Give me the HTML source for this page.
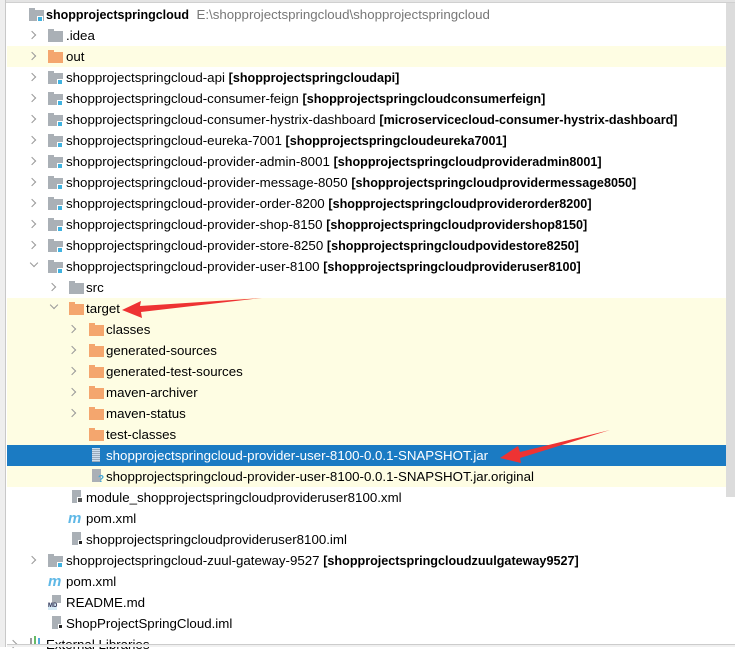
<!DOCTYPE html>
<html><head><meta charset="utf-8"><style>
*{margin:0;padding:0;box-sizing:border-box}
body{width:735px;height:647px;overflow:hidden;background:#fff;font-family:"Liberation Sans","Noto Sans CJK SC",sans-serif;font-size:13.3px;color:#000;position:relative}
.strip{position:absolute;left:0;top:0;width:6px;height:647px;background:#eeeeee;border-right:1px solid #c8c8c8}
.top{position:absolute;left:0;top:0;width:735px;height:3px;background:#e4e4e4;border-bottom:1px solid #d0d0d0}
.sb{position:absolute;left:726px;top:3px;width:9px;height:494px;background:#dcdcdc}
.hl{position:absolute;left:7px;width:719px;background:#fefde3}
.sel{position:absolute;left:7px;width:728px;height:21px;top:445px;background:#1b7bc3}
.row{position:absolute;height:21px;line-height:21px;white-space:nowrap}
.arr{position:absolute;width:6px;height:6px;border-right:1.5px solid #999;border-bottom:1.5px solid #999}
.r{transform:rotate(-45deg)}
.d{transform:rotate(45deg)}
.fo{position:absolute;width:15px;height:11px}
.fo:before{content:"";position:absolute;left:0;top:-2px;width:6px;height:3px;background:inherit}
.g{background:#aab0b6}.o{background:#f4a66e}
.bd{position:absolute;width:6px;height:6px;background:#3fb2e0;border:1px solid #fff}
b{font-weight:bold;font-size:12.6px}
.gr{color:#777}
</style></head><body>
<div class="top"></div>
<div class="hl" style="top:46px;height:21px"></div>
<div class="hl" style="top:298px;height:189px"></div>
<div class="sel"></div>
<div class="sb"></div>
<div class="strip"></div>
<div class="arr d" style="left:33px;top:9px"></div><div class="fo g" style="left:29px;top:10px"></div><div class="bd" style="left:37px;top:16px"></div>
<div class="row" style="left:46px;top:4px"><b style="font-size:12.5px">shopprojectspringcloud</b> <span class="gr">&nbsp;E:\shopprojectspringcloud\shopprojectspringcloud</span></div>

<div class="arr r" style="left:29px;top:32px"></div><div class="fo g" style="left:48px;top:31px"></div>
<div class="row" style="left:66px;top:25px">.idea</div>
<div class="arr r" style="left:29px;top:53px"></div><div class="fo o" style="left:48px;top:52px"></div>
<div class="row" style="left:66px;top:46px">out</div>

<div class="arr r" style="left:29px;top:74px"></div><div class="fo g" style="left:48px;top:73px"></div><div class="bd" style="left:57px;top:79px"></div>
<div class="row" style="left:66px;top:67px">shopprojectspringcloud-api <b>[shopprojectspringcloudapi]</b></div>
<div class="arr r" style="left:29px;top:95px"></div><div class="fo g" style="left:48px;top:94px"></div><div class="bd" style="left:57px;top:100px"></div>
<div class="row" style="left:66px;top:88px">shopprojectspringcloud-consumer-feign <b>[shopprojectspringcloudconsumerfeign]</b></div>
<div class="arr r" style="left:29px;top:116px"></div><div class="fo g" style="left:48px;top:115px"></div><div class="bd" style="left:57px;top:121px"></div>
<div class="row" style="left:66px;top:109px">shopprojectspringcloud-consumer-hystrix-dashboard <b>[microservicecloud-consumer-hystrix-dashboard]</b></div>
<div class="arr r" style="left:29px;top:137px"></div><div class="fo g" style="left:48px;top:136px"></div><div class="bd" style="left:57px;top:142px"></div>
<div class="row" style="left:66px;top:130px">shopprojectspringcloud-eureka-7001 <b>[shopprojectspringcloudeureka7001]</b></div>
<div class="arr r" style="left:29px;top:158px"></div><div class="fo g" style="left:48px;top:157px"></div><div class="bd" style="left:57px;top:163px"></div>
<div class="row" style="left:66px;top:151px">shopprojectspringcloud-provider-admin-8001 <b>[shopprojectspringcloudprovideradmin8001]</b></div>
<div class="arr r" style="left:29px;top:179px"></div><div class="fo g" style="left:48px;top:178px"></div><div class="bd" style="left:57px;top:184px"></div>
<div class="row" style="left:66px;top:172px">shopprojectspringcloud-provider-message-8050 <b>[shopprojectspringcloudprovidermessage8050]</b></div>
<div class="arr r" style="left:29px;top:200px"></div><div class="fo g" style="left:48px;top:199px"></div><div class="bd" style="left:57px;top:205px"></div>
<div class="row" style="left:66px;top:193px">shopprojectspringcloud-provider-order-8200 <b>[shopprojectspringcloudproviderorder8200]</b></div>
<div class="arr r" style="left:29px;top:221px"></div><div class="fo g" style="left:48px;top:220px"></div><div class="bd" style="left:57px;top:226px"></div>
<div class="row" style="left:66px;top:214px">shopprojectspringcloud-provider-shop-8150 <b>[shopprojectspringcloudprovidershop8150]</b></div>
<div class="arr r" style="left:29px;top:242px"></div><div class="fo g" style="left:48px;top:241px"></div><div class="bd" style="left:57px;top:247px"></div>
<div class="row" style="left:66px;top:235px">shopprojectspringcloud-provider-store-8250 <b>[shopprojectspringcloudpovidestore8250]</b></div>
<div class="arr d" style="left:31px;top:260px"></div><div class="fo g" style="left:48px;top:262px"></div><div class="bd" style="left:57px;top:268px"></div>
<div class="row" style="left:66px;top:256px">shopprojectspringcloud-provider-user-8100 <b>[shopprojectspringcloudprovideruser8100]</b></div>

<div class="arr r" style="left:49px;top:284px"></div><div class="fo g" style="left:69px;top:283px"></div>
<div class="row" style="left:86px;top:277px">src</div>
<div class="arr d" style="left:51px;top:302px"></div><div class="fo o" style="left:69px;top:304px"></div>
<div class="row" style="left:86px;top:298px">target</div>

<div class="arr r" style="left:69px;top:326px"></div><div class="fo o" style="left:89px;top:325px"></div>
<div class="row" style="left:106px;top:319px">classes</div>
<div class="arr r" style="left:69px;top:347px"></div><div class="fo o" style="left:89px;top:346px"></div>
<div class="row" style="left:106px;top:340px">generated-sources</div>
<div class="arr r" style="left:69px;top:368px"></div><div class="fo o" style="left:89px;top:367px"></div>
<div class="row" style="left:106px;top:361px">generated-test-sources</div>
<div class="arr r" style="left:69px;top:389px"></div><div class="fo o" style="left:89px;top:388px"></div>
<div class="row" style="left:106px;top:382px">maven-archiver</div>
<div class="arr r" style="left:69px;top:410px"></div><div class="fo o" style="left:89px;top:409px"></div>
<div class="row" style="left:106px;top:403px">maven-status</div>
<div class="fo o" style="left:89px;top:430px"></div>
<div class="row" style="left:106px;top:424px">test-classes</div>

<div style="position:absolute;left:92px;top:448px;width:8px;height:14px;background:repeating-linear-gradient(0deg,#9ab 0 1px,#cde 1px 2px)"></div>
<div class="row" style="left:106px;top:445px;color:#fff">shopprojectspringcloud-provider-user-8100-0.0.1-SNAPSHOT.jar</div>
<div style="position:absolute;left:92px;top:469px;width:9px;height:13px;background:#aab0b6"></div><div style="position:absolute;left:98px;top:474px;font-size:10px;color:#3fa8d8;font-weight:bold">?</div>
<div class="row" style="left:106px;top:466px">shopprojectspringcloud-provider-user-8100-0.0.1-SNAPSHOT.jar.original</div>

<div style="position:absolute;left:72px;top:490px;width:9px;height:13px;background:#aab0b6"></div><div style="position:absolute;left:77px;top:497px;width:6px;height:6px;background:#555;border:1px solid #fff"></div>
<div class="row" style="left:86px;top:487px">module_shopprojectspringcloudprovideruser8100.xml</div>
<div class="row" style="left:68px;top:508px;color:#5fb8e6;font-weight:bold;font-style:italic;font-size:15px">m</div>
<div class="row" style="left:86px;top:508px">pom.xml</div>
<div style="position:absolute;left:72px;top:532px;width:9px;height:13px;background:#aab0b6"></div><div style="position:absolute;left:78px;top:540px;width:5px;height:5px;background:#222;border:1px solid #fff"></div>
<div class="row" style="left:86px;top:529px">shopprojectspringcloudprovideruser8100.iml</div>

<div class="arr r" style="left:29px;top:557px"></div><div class="fo g" style="left:48px;top:556px"></div><div class="bd" style="left:57px;top:562px"></div>
<div class="row" style="left:66px;top:550px">shopprojectspringcloud-zuul-gateway-9527 <b>[shopprojectspringcloudzuulgateway9527]</b></div>
<div class="row" style="left:48px;top:571px;color:#5fb8e6;font-weight:bold;font-style:italic;font-size:15px">m</div>
<div class="row" style="left:66px;top:571px">pom.xml</div>
<div style="position:absolute;left:52px;top:595px;width:9px;height:8px;background:#aab0b6"></div><div style="position:absolute;left:48px;top:603px;font-size:6px;font-weight:bold;background:#d6ebf6;color:#335;line-height:7px">MD</div>
<div class="row" style="left:66px;top:592px">README.md</div>
<div style="position:absolute;left:52px;top:616px;width:9px;height:13px;background:#aab0b6"></div><div style="position:absolute;left:58px;top:624px;width:5px;height:5px;background:#222;border:1px solid #fff"></div>
<div class="row" style="left:66px;top:613px">ShopProjectSpringCloud.iml</div>
<div class="arr r" style="left:10px;top:641px"></div>
<div style="position:absolute;left:30px;top:638px;width:2px;height:9px;background:#999"></div><div style="position:absolute;left:34px;top:636px;width:2px;height:11px;background:#6b6"></div><div style="position:absolute;left:38px;top:638px;width:2px;height:9px;background:#5ad"></div>
<div class="row" style="left:46px;top:634px">External Libraries</div>
<div style="position:absolute;left:7px;top:644px;width:728px;height:3px;border-top:1px solid #ccc;background:#f0f0f0"></div>

<svg style="position:absolute;left:0;top:0" width="735" height="647">
<polygon points="262,298 140,306 141,301 122,310 142,318 141,312" fill="#ee3333"/>
<polygon points="610,430 520,452 518,446 500,458 521,463 520,458" fill="#ee3333"/>
</svg>
</body></html>
